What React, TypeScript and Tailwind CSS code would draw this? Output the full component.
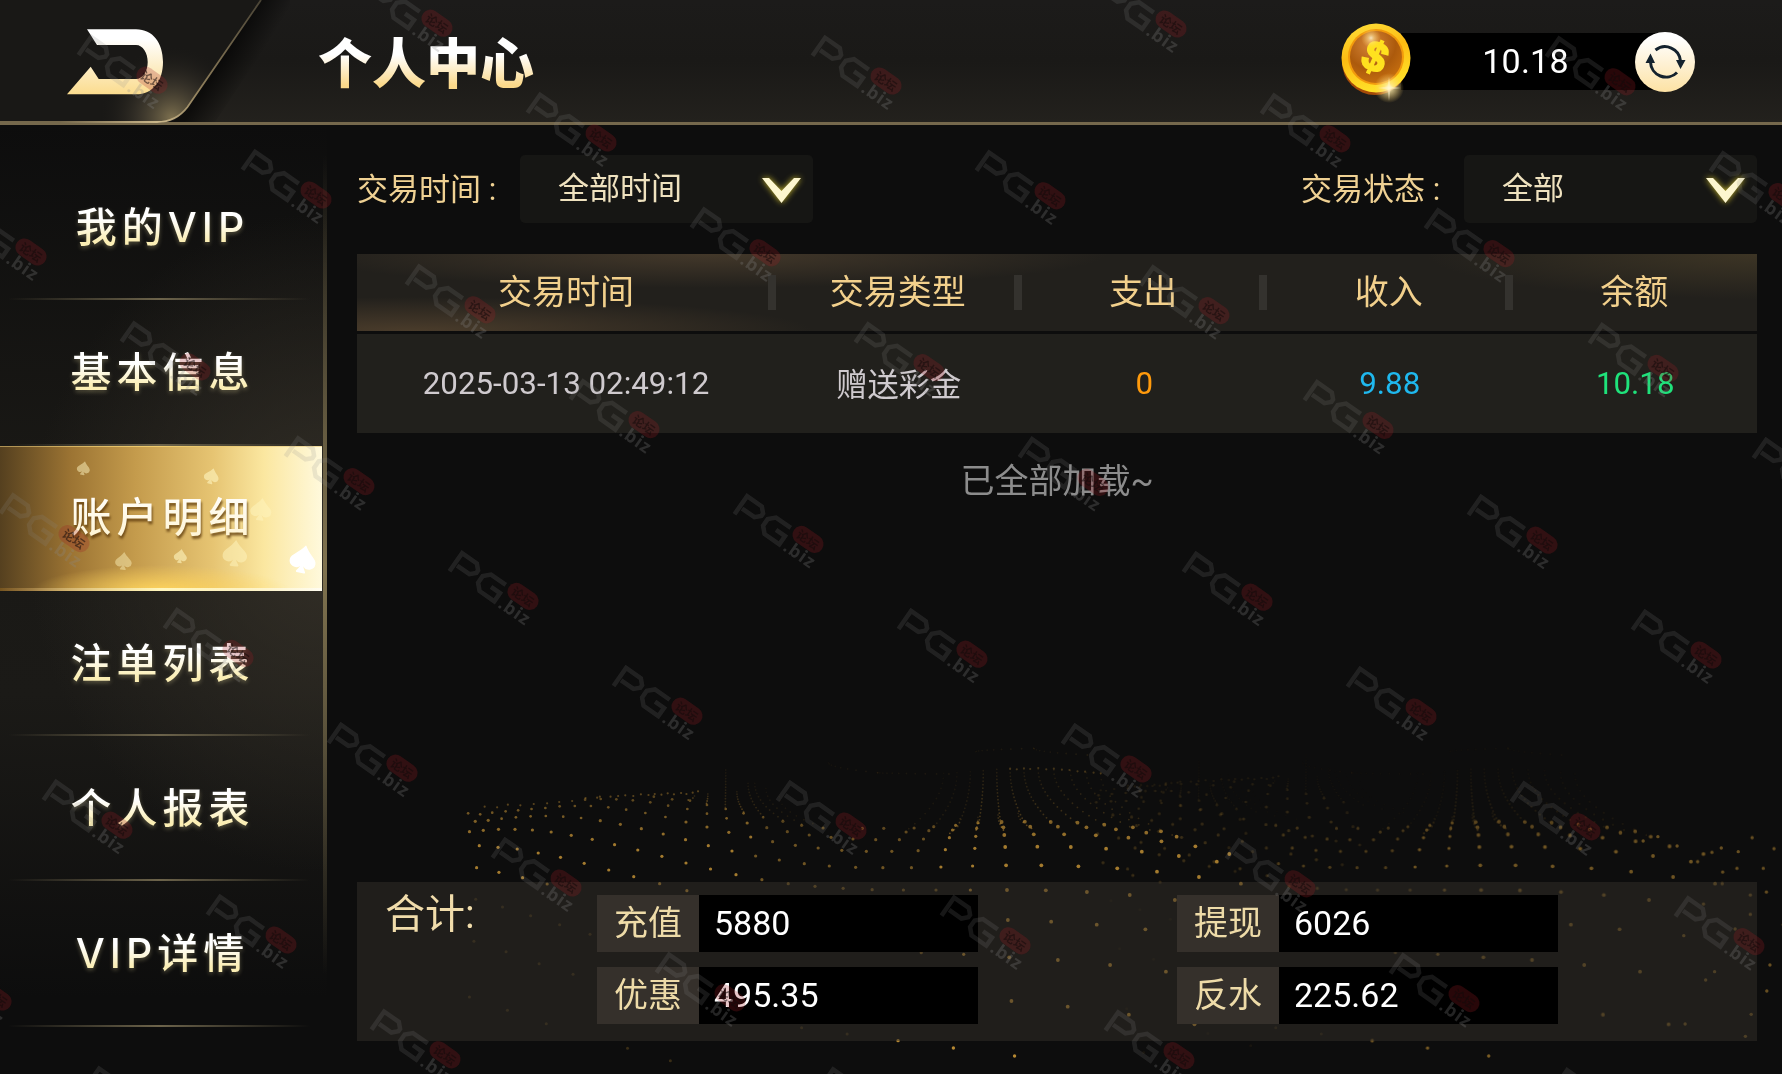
import { useState } from 'react';
import { BsSuitSpadeFill } from 'react-icons/bs';

interface MenuItem {
    id: string;
    label: string;
}

interface Transaction {
    time: string;
    type: string;
    expense: string;
    income: string;
    balance: string;
}

const menuItems: MenuItem[] = [
    { id: 'vip', label: '我的VIP' },
    { id: 'info', label: '基本信息' },
    { id: 'account', label: '账户明细' },
    { id: 'bets', label: '注单列表' },
    { id: 'report', label: '个人报表' },
    { id: 'vipDetail', label: 'VIP详情' }
];

const columns = ['交易时间', '交易类型', '支出', '收入', '余额'];

const transactions: Transaction[] = [
    { time: '2025-03-13 02:49:12', type: '赠送彩金', expense: '0', income: '9.88', balance: '10.18' }
];

const totals = [
    [{ label: '充值', value: '5880' }, { label: '优惠', value: '495.35' }],
    [{ label: '提现', value: '6026' }, { label: '反水', value: '225.62' }]
];

// x, y, size, rotation, opacity
const spades = [
    [83, 23, 15, 12, 0.5],
    [211, 31, 17, 15, 0.6],
    [261, 64, 24, 8, 0.5],
    [123, 116, 19, 5, 0.45],
    [180, 111, 15, 10, 0.6],
    [235, 108, 28, 5, 0.5],
    [303, 114, 30, 12, 1]
];

// particle wave rows, [x, y] on a 1568 x 1062 field
const waveRows: number[][][] = [
    [[66, 335], [97, 331], [131, 328], [168, 328], [207, 330], [249, 336], [294, 346], [341, 358], [391, 374], [443, 390], [497, 409], [551, 429], [606, 447], [663, 464], [721, 479], [780, 491], [840, 499], [903, 505], [968, 509], [1038, 510], [1111, 510], [1188, 510], [1270, 510], [1357, 511], [1449, 516], [1545, 525], [1646, 540]],
    [[88, 377], [130, 382], [173, 387], [220, 399], [270, 412], [323, 430], [378, 450], [434, 470], [492, 491], [553, 512]],
    [[82, 443], [132, 457], [185, 473], [240, 492]],
    [[79, 304], [108, 301], [138, 296], [170, 292], [203, 289], [237, 288], [276, 290], [316, 294], [359, 302], [404, 313], [451, 326], [500, 342], [550, 359], [601, 377], [654, 393], [707, 408], [760, 420], [816, 431], [872, 438], [931, 442], [992, 443], [1056, 443], [1122, 441], [1193, 438], [1268, 436], [1347, 436], [1430, 439], [1517, 445], [1606, 455], [1700, 471], [1794, 491]],
    [[63, 280], [90, 283], [117, 278], [147, 274], [175, 271], [205, 267], [236, 264], [268, 259], [302, 258], [338, 258], [377, 262], [417, 269], [460, 279], [505, 291], [551, 306], [598, 321], [647, 337], [696, 351], [745, 365], [796, 376], [847, 384], [900, 391], [955, 394], [1012, 394], [1071, 392], [1132, 389], [1198, 385], [1266, 381], [1338, 380], [1413, 381], [1492, 386], [1572, 395], [1655, 408], [1740, 425]],
    [[325, 239], [360, 237], [395, 238], [432, 241], [471, 247], [511, 257], [554, 267], [598, 281], [642, 295], [688, 309], [732, 323], [778, 335], [827, 345], [876, 352], [925, 357], [976, 359], [1029, 359], [1083, 357], [1141, 353], [1200, 349], [1264, 345], [1330, 343], [1398, 343], [1469, 346], [1542, 353], [1616, 364], [1692, 379], [1768, 402]],
    [[479, 230], [520, 238], [560, 242], [598, 255], [640, 267], [680, 280], [724, 292], [768, 304], [810, 316], [858, 324], [946, 325], [994, 325], [1044, 336], [1095, 332], [1148, 330], [1202, 325], [1262, 322], [1322, 320], [1384, 320], [1448, 322], [1514, 328], [1582, 338], [1650, 350]],
    [[1062, 324], [1106, 320], [1155, 316], [1205, 308], [1258, 306], [1310, 305], [1368, 306], [1428, 308], [1488, 314], [1552, 322], [1615, 334]],
    [[1272, 600], [1369, 605], [1471, 614], [1580, 628]],
    [[1078, 698], [1173, 703], [1275, 712], [1384, 720], [1501, 735], [1626, 755]],
    [[1280, 843], [1406, 860], [1543, 884], [1690, 913]]
];

const brightDots = [[1026, 962], [1150, 984], [1287, 1008]];

const faintDots = [
    [80, 538], [140, 561], [203, 587], [268, 614], [336, 643], [76, 664], [148, 695], [222, 731], [298, 763],
    [66, 831], [151, 871], [238, 911], [420, 985], [516, 1022], [810, 923], [912, 942]
];

const crestDots = [
    [100, 260], [128, 262], [152, 254], [180, 256], [210, 252], [240, 250], [267, 246], [296, 243], [326, 234], [352, 233],
    [358, 230], [382, 230], [399, 228], [415, 226], [433, 228], [450, 223], [467, 225], [481, 222], [496, 224], [510, 220],
    [524, 223], [540, 219], [552, 222], [566, 218], [578, 214], [1277, 146], [1292, 148], [1308, 145], [1322, 147],
    [1340, 144], [1358, 148], [1375, 146], [1393, 149], [1410, 150], [1428, 154], [1445, 155], [1464, 158], [1480, 160]
];

// dotted trails running up the slopes: x1, y1, x2, y2, dots, opacity
const trails = [
    [600, 222, 597, 250, 5, 0.4], [640, 150, 639, 262, 14, 0.2], [570, 228, 556, 240, 3, 0.4], [665, 215, 680, 275, 9, 0.3],
    [690, 190, 724, 290, 12, 0.2], [705, 190, 768, 300, 12, 0.15], [730, 205, 810, 312, 10, 0.12], [760, 230, 858, 322, 9, 0.1],
    [1217, 152, 1207, 310, 16, 0.3], [1247, 148, 1256, 310, 17, 0.3], [1277, 148, 1308, 305, 16, 0.28],
    [1308, 148, 1366, 304, 16, 0.25], [1340, 148, 1424, 306, 15, 0.25], [1375, 150, 1485, 312, 14, 0.22],
    [1412, 152, 1545, 320, 13, 0.22], [1448, 158, 1590, 330, 12, 0.22], [1480, 162, 1640, 345, 12, 0.2],
    [1188, 155, 1160, 320, 16, 0.14], [1158, 158, 1105, 322, 14, 0.12], [1128, 160, 1050, 326, 12, 0.1],
    [1165, 296, 1142, 340, 5, 0.4], [1205, 292, 1201, 330, 5, 0.4], [1250, 285, 1262, 330, 6, 0.45], [1295, 280, 1325, 325, 6, 0.4],
    [1200, 95, 1330, 85, 10, 0.1], [1330, 85, 1450, 105, 10, 0.1], [870, 128, 980, 158, 9, 0.08], [980, 158, 1140, 162, 12, 0.08]
];

// right hand edge of the field
const edgeDots = [
    [1762, 384], [1800, 395], [1741, 397], [1709, 425], [1797, 445], [1765, 456], [1764, 491], [1856, 445], [1880, 386],
    [1903, 346], [1831, 353], [1587, 363], [1663, 378], [1620, 350], [1863, 516], [1827, 525], [1901, 614], [1871, 735],
    [1864, 813], [1722, 552], [1793, 627], [1678, 647], [1747, 755], [1727, 780], [1829, 883], [1681, 912], [1816, 949],
    [1904, 702], [1827, 583]
].map(([x, y]) => [x + 1108, y]);

const Dot = ({ x, y, size, opacity }: { x: number; y: number; size: number; opacity: number }) => (
    <ellipse cx={x} cy={y} rx={size * 2.24} ry={size * 3} fill="#c08f35" opacity={opacity} />
);

const WaveDots = ({ from, to = 2000, crest = true }: { from: number; to?: number; crest?: boolean }) => {
    const inRange = ([x]: number[]) => x >= from && x <= to;

    return (
        <>
            {waveRows.map((row, r) => row.filter(inRange).map(([x, y], i) => {
                const dip = x > 700 && x < 1120 ? 0.65 : 1;
                const near = Math.min(1, 0.5 + (y - 230) / 300);
                return <Dot key={`${r}-${i}`} x={x} y={y} size={(x > 1230 ? 1.9 : 1.6) * (y < 300 ? 0.85 : 1)} opacity={0.85 * near * dip} />;
            }))}
            {brightDots.filter(inRange).map(([x, y]) => <Dot key={`${x}-${y}`} x={x} y={y} size={1.7} opacity={0.95} />)}
            {faintDots.filter(inRange).map(([x, y]) => <Dot key={`${x}-${y}`} x={x} y={y} size={1.5} opacity={0.25} />)}
            {crest && crestDots.filter(inRange).map(([x, y]) => <Dot key={`${x}-${y}`} x={x} y={y} size={1.1} opacity={x > 1000 ? 0.3 : 0.42} />)}
            {trails.filter(inRange).map(([x1, y1, x2, y2, count, opacity], t) => (
                Array.from({ length: count }, (_, i) => {
                    const k = i / (count - 1);
                    return (
                        <Dot key={`${t}-${i}`} x={x1 + (x2 - x1) * k * k} y={y1 + (y2 - y1) * k} size={0.9} opacity={opacity * (0.4 + k * 0.8)} />
                    );
                })
            ))}
        </>
    );
};

const ParticleField = () => (
    <svg className="absolute left-[440px] top-[720px] h-[354px] w-[1342px]" viewBox="0 0 3006 1062" preserveAspectRatio="none">
        <WaveDots from={0} />
        <g transform="translate(1062 0)" opacity="0.65">
            <WaveDots from={800} crest={false} />
        </g>
        {/* second hump fading out behind the first */}
        <g transform="translate(1300 -45)" opacity="0.28">
            <WaveDots from={170} to={760} />
        </g>
        <g transform="translate(1060 -25)" opacity="0.3">
            <WaveDots from={480} to={760} />
        </g>
        {edgeDots.map(([x, y]) => <Dot key={`${x}-${y}`} x={x} y={y} size={1.7} opacity={0.5} />)}
    </svg>
);

const Watermarks = () => {
    const marks: { x: number; y: number }[] = [];
    for (let n = -6; n <= 14; n++) {
        for (let m = -8; m <= 8; m++) {
            const x = 239 + 164 * n - 285 * m;
            const y = 144 + 114.8 * n + 57 * m;
            if (x > -90 && x < 1775 && y > -78 && y < 1070) marks.push({ x, y });
        }
    }

    return (
        <svg className="pointer-events-none absolute inset-0 z-20 h-full w-full" viewBox="0 0 1782 1074">
            {marks.map(({ x, y }) => (
                <g key={`${x}-${y}`} transform={`translate(${x} ${y})`}>
                    <g transform="translate(3 23) rotate(35)" fill="none" stroke="#8a8a8a" strokeWidth="4.500" opacity="0.17">
                        <path d="M2 2V-20H20L25 -15V-12L20 -7H5" />
                        <path d="M56 -19H38L32 -13V-5L38 1H56V-9H45" />
                    </g>
                    <rect x="-17" y="-9" width="34" height="18" rx="9" transform="translate(77 51) rotate(35)" fill="#a01c24" opacity="0.25" />
                    <text x="-12" y="5" transform="translate(77 51) rotate(35)" fill="#120a0a" opacity="0.55" className="font-['Noto_Sans_CJK_SC',sans-serif] text-[12px] font-bold">论坛</text>
                    <text transform="translate(51 61) rotate(35)" fill="#8a8a8a" opacity="0.26" className="font-['Open_Sans','Noto_Sans',sans-serif] text-[18px] font-bold tracking-[1px]">.biz</text>
                </g>
            ))}
        </svg>
    );
};

const BackButton = () => (
    <button type="button" className="h-[125px] w-[290px] shrink-0">
        <svg width="290" height="125" viewBox="0 0 290 125">
            <defs>
                <linearGradient id="backIcon" x1="0" y1="0" x2="0" y2="1">
                    <stop offset="0.15" stopColor="#ffffff" />
                    <stop offset="1" stopColor="#fbdc8e" />
                </linearGradient>
                <linearGradient id="tabEdge" gradientUnits="userSpaceOnUse" x1="60" y1="0" x2="261" y2="0">
                    <stop offset="0" stopColor="#75684c" />
                    <stop offset="0.5" stopColor="#cdb98c" />
                    <stop offset="0.7" stopColor="#8d7d5a" />
                    <stop offset="1" stopColor="#4a4436" />
                </linearGradient>
                <radialGradient id="tabGlow" gradientUnits="userSpaceOnUse" cx="172" cy="118" r="72">
                    <stop offset="0" stopColor="#8f8059" stopOpacity="0.85" />
                    <stop offset="0.5" stopColor="#5a5140" stopOpacity="0.4" />
                    <stop offset="1" stopColor="#1b1a18" stopOpacity="0" />
                </radialGradient>
                <linearGradient id="tabShade" gradientUnits="userSpaceOnUse" x1="222" y1="60" x2="248" y2="76">
                    <stop offset="0" stopColor="#000000" stopOpacity="0.6" />
                    <stop offset="1" stopColor="#000000" stopOpacity="0" />
                </linearGradient>
            </defs>
            <path d="M261 0L187 107Q178 122 165 122H215L290 10V0Z" fill="url(#tabShade)" />
            <path d="M0 0H261L187.500 107Q176 122.500 157 122.500H0Z" fill="#191816" />
            <path d="M0 0H261L187.500 107Q176 122.500 157 122.500H0Z" fill="url(#tabGlow)" />
            <path d="M261 0L187.500 107Q176 122 157 122H0" fill="none" stroke="url(#tabEdge)" strokeWidth="1.800" />
            <path d="M87 29.300H136C153 29.300 163 43 163 62S153 94.300 136 94.300H67L90.700 66.700L98.700 79H136C143 79 147.700 71 147.700 62S143 45 136 45H97Z" fill="url(#backIcon)" />
        </svg>
    </button>
);

const Coin = () => (
    <svg width="84" height="90" viewBox="0 0 84 90" className="relative z-10 -mr-[17px] mt-[4px] shrink-0">
        <defs>
            <linearGradient id="coinRim" x1="0" y1="0" x2="0.3" y2="1">
                <stop offset="0" stopColor="#ffe23c" />
                <stop offset="0.5" stopColor="#fdbb12" />
                <stop offset="1" stopColor="#ffe028" />
            </linearGradient>
            <radialGradient id="coinFace" cx="0.4" cy="0.25" r="0.8">
                <stop offset="0" stopColor="#d6853a" />
                <stop offset="0.6" stopColor="#ac5a0c" />
                <stop offset="1" stopColor="#c87010" />
            </radialGradient>
            <radialGradient id="spark">
                <stop offset="0" stopColor="#fffbe0" />
                <stop offset="0.3" stopColor="#ffe9a0" stopOpacity="0.7" />
                <stop offset="1" stopColor="#ffd060" stopOpacity="0" />
            </radialGradient>
        </defs>
        <ellipse cx="39" cy="43" rx="33" ry="33" fill="#a54a08" />
        <circle cx="40" cy="39" r="34.500" fill="url(#coinRim)" />
        <circle cx="40" cy="38" r="28" fill="#f29a0c" />
        <circle cx="40" cy="38" r="26" fill="url(#coinFace)" />
        <text x="39" y="52" textAnchor="middle" transform="rotate(24 39 38)" fill="#ffe11f" stroke="#ffe11f" strokeWidth="2" className="font-['Liberation_Sans',sans-serif] text-[42px] font-bold">$</text>
        <circle cx="35" cy="19" r="10" fill="url(#spark)" opacity="0.8" />
        <circle cx="53" cy="69" r="15" fill="url(#spark)" />
        <path d="M53 58L54.500 67.500L65 69L54.500 70.500L53 82L51.500 70.500L42 69L51.500 67.500Z" fill="#fff6cf" opacity="0.5" />
    </svg>
);

const RefreshButton = () => (
    <button type="button" className="relative z-10 -ml-[20px] shrink-0">
        <svg width="60" height="60" viewBox="0 0 60 60">
            <defs>
                <linearGradient id="refreshBg" x1="0" y1="0" x2="0" y2="1">
                    <stop offset="0.1" stopColor="#ffffff" />
                    <stop offset="1" stopColor="#fde2a4" />
                </linearGradient>
            </defs>
            <circle cx="30" cy="30" r="30" fill="url(#refreshBg)" />
            <path d="M20.500 18A15.500 15.500 0 0 1 45.500 29M15.500 30A15.500 15.500 0 0 0 42 40.500" fill="none" stroke="#14222e" strokeWidth="3" />
            <path d="M41 28H50.500L45.500 37ZM10.500 31H20L15.500 21.500Z" fill="#14222e" />
        </svg>
    </button>
);

const Header = () => (
    <header className="relative z-10 flex h-[125px] items-start border-b-[3px] border-[#75684c] bg-linear-to-b from-[#1c1b1a] via-[#1a1917] to-[#23211d]">
        <BackButton />
        <h1 className="ml-[28px] mt-[28px] bg-linear-to-b from-white from-35% to-[#fbd98a] to-75% bg-clip-text text-[54px] font-black leading-[76px] text-transparent">
            个人中心
        </h1>
        <div className="ml-auto mr-[87px] flex h-[123px] items-center">
            <Coin />
            <div className="-ml-[2px] h-[57px] w-[254px] bg-black pr-[5px] text-center text-[34px] leading-[57px] tracking-[0.2px] text-white">
                10.18
            </div>
            <RefreshButton />
        </div>
    </header>
);

const Sidebar = ({ active, onSelect }: { active: string; onSelect: (id: string) => void }) => (
    <nav className="relative flex w-[327px] shrink-0 flex-col bg-[radial-gradient(ellipse_300px_330px_at_100%_44%,#332f27,transparent),linear-gradient(to_bottom,#0d0d0d,#191815_35%,#1b1a17_60%,#0d0d0d_92%)] pt-[30px]">
        {menuItems.map((item) => (
            <button
                key={item.id}
                type="button"
                onClick={() => onSelect(item.id)}
                className={`relative mr-[5px] flex h-[145.3px] items-center justify-center ${active === item.id
                    ? 'bg-[linear-gradient(to_right,#55401f,#9c7433_22%,#c49b4c_42%,#e6c472_66%,#fbe7a0_82%,#fff9dc)]'
                    : ''
                    }`}
            >
                {active === item.id && (
                    <>
                        <div className="absolute inset-0 border-t border-[#e8c878]/60 bg-[radial-gradient(ellipse_40%_18%_at_50%_100%,#ffd45c,transparent)]" />
                        <div className="absolute inset-x-0 bottom-0 h-[3px] bg-linear-to-r from-[#a87420]/40 via-[#fff6bd] to-white/60" />
                        {spades.map(([x, y, size, rotation, opacity]) => (
                            <BsSuitSpadeFill
                                key={x}
                                size={size}
                                color={opacity === 1 ? '#ffffff' : '#fff6c0'}
                                className="absolute"
                                style={{ left: x - size / 2, top: y - size / 2, opacity, transform: `rotate(${rotation}deg)` }}
                            />
                        ))}
                    </>
                )}
                <span
                    className={`relative mb-[2px] bg-clip-text pl-[3px] font-[Inter,'Noto_Sans_CJK_SC',sans-serif] text-[41px] font-medium leading-[56px] tracking-[5px] text-transparent ${active === item.id
                        ? 'bg-linear-to-b from-white to-[#fff3cd] drop-shadow-[1px_3px_1px_rgba(90,55,10,0.75)]'
                        : 'bg-linear-to-b from-white from-35% to-[#fbeeb4] to-75% drop-shadow-[0_2px_2px_rgba(190,180,130,0.4)]'
                        }`}
                >
                    {item.label}
                </span>
                {active !== item.id && (
                    <span className="absolute bottom-0 left-[8px] right-[12px] h-[2px] bg-linear-to-r from-transparent via-[#6d644b] to-transparent" />
                )}
            </button>
        ))}
        <div className="absolute right-0 top-[30px] h-[820px] w-[4px] bg-linear-to-b from-transparent via-[#80734f] to-transparent" />
    </nav>
);

const FilterSelect = ({ label, value }: { label: string; value: string }) => (
    <div className="flex items-center">
        <span className="w-[163px] pt-[3px] text-[31px] text-[#efd193]">{label} :</span>
        <button type="button" className="flex h-[68px] w-[293px] items-center justify-between rounded-[5px] bg-[#161614] pl-[38px] pr-[11px] text-[31px] text-[#efe2bf]">
            {value}
            <svg width="41" height="26" viewBox="0 0 41 26" className="mt-[3px] overflow-visible drop-shadow-[0_0_3px_#c9b92e]">
                <path d="M1 0H8L20.500 13L33 0H40L20.500 25Z" fill="#fdf6cf" />
            </svg>
        </button>
    </div>
);

const TransactionTable = () => (
    <div className="mt-[31px]">
        <div className="grid h-[77px] grid-cols-[418px_repeat(4,1fr)] items-center bg-[#22201c] bg-[radial-gradient(ellipse_400px_34px_at_25%_0%,#43382a,transparent),radial-gradient(ellipse_400px_34px_at_4%_100%,#4a3c2b,transparent),radial-gradient(ellipse_330px_45px_at_100%_0%,#3d3525,transparent)]">
            {columns.map((column, index) => (
                <div key={column} className="relative text-center text-[34px] leading-[70px] text-[#f2d08c]">
                    <span className="relative -top-px">{column}</span>
                    {index < columns.length - 1 && (
                        <span className="absolute -right-px top-[17px] h-[35px] w-[8px] bg-[#34322e]" />
                    )}
                </div>
            ))}
        </div>
        {transactions.map((row) => (
            <div key={row.time} className="mt-[3px] grid h-[99px] grid-cols-[418px_repeat(4,1fr)] items-center bg-[#21201c] pt-[2px] text-center text-[31.3px]">
                <div className="text-[#cfcace]">{row.time}</div>
                <div className="pl-[2px] pt-[4px] text-[#cfcace]">{row.type}</div>
                <div className="pl-[2px] text-[#ff9a0c]">{row.expense}</div>
                <div className="pl-[2px] text-[#1fb8ee]">{row.income}</div>
                <div className="pl-[2px] text-[#1fe27b]">{row.balance}</div>
            </div>
        ))}
    </div>
);

const Totals = () => (
    <section className="flex h-[159px] items-start bg-[#33302a]/50">
        <div className="w-[240px] pl-[28px] pt-[3px] text-[40px] leading-[60px] text-[#f0dcab]">合计:</div>
        {totals.map((group, index) => (
            <div key={index} className="mr-[199px] mt-[13px] flex flex-col gap-[15px] last:mr-0">
                {group.map((item) => (
                    <div key={item.label} className="flex h-[57px] w-[381px] text-[34px] leading-[56px]">
                        <div className="w-[102px] bg-[#35302b] text-center text-[#eedba8]">{item.label}</div>
                        <div className="flex-1 bg-black pl-[15px] text-white">{item.value}</div>
                    </div>
                ))}
            </div>
        ))}
    </section>
);

const App = () => {
    const [active, setActive] = useState('account');

    return (
        <div className="relative flex h-[1074px] w-[1782px] flex-col overflow-hidden bg-[#0d0d0d] font-[Roboto,'Noto_Sans_CJK_SC',sans-serif]">
            <ParticleField />
            <Header />
            <div className="relative flex flex-1">
                <Sidebar active={active} onSelect={setActive} />
                <main className="flex flex-1 flex-col pb-[33px] pl-[30px] pr-[25px] pt-[30px]">
                    <div className="flex justify-between">
                        <FilterSelect label="交易时间" value="全部时间" />
                        <FilterSelect label="交易状态" value="全部" />
                    </div>
                    <TransactionTable />
                    <p className="mt-[23px] text-center text-[34px] leading-[50px] text-[#8c8c8c]">已全部加载~</p>
                    <div className="mt-auto">
                        <Totals />
                    </div>
                </main>
            </div>
            <Watermarks />
        </div>
    );
};

export default App;
